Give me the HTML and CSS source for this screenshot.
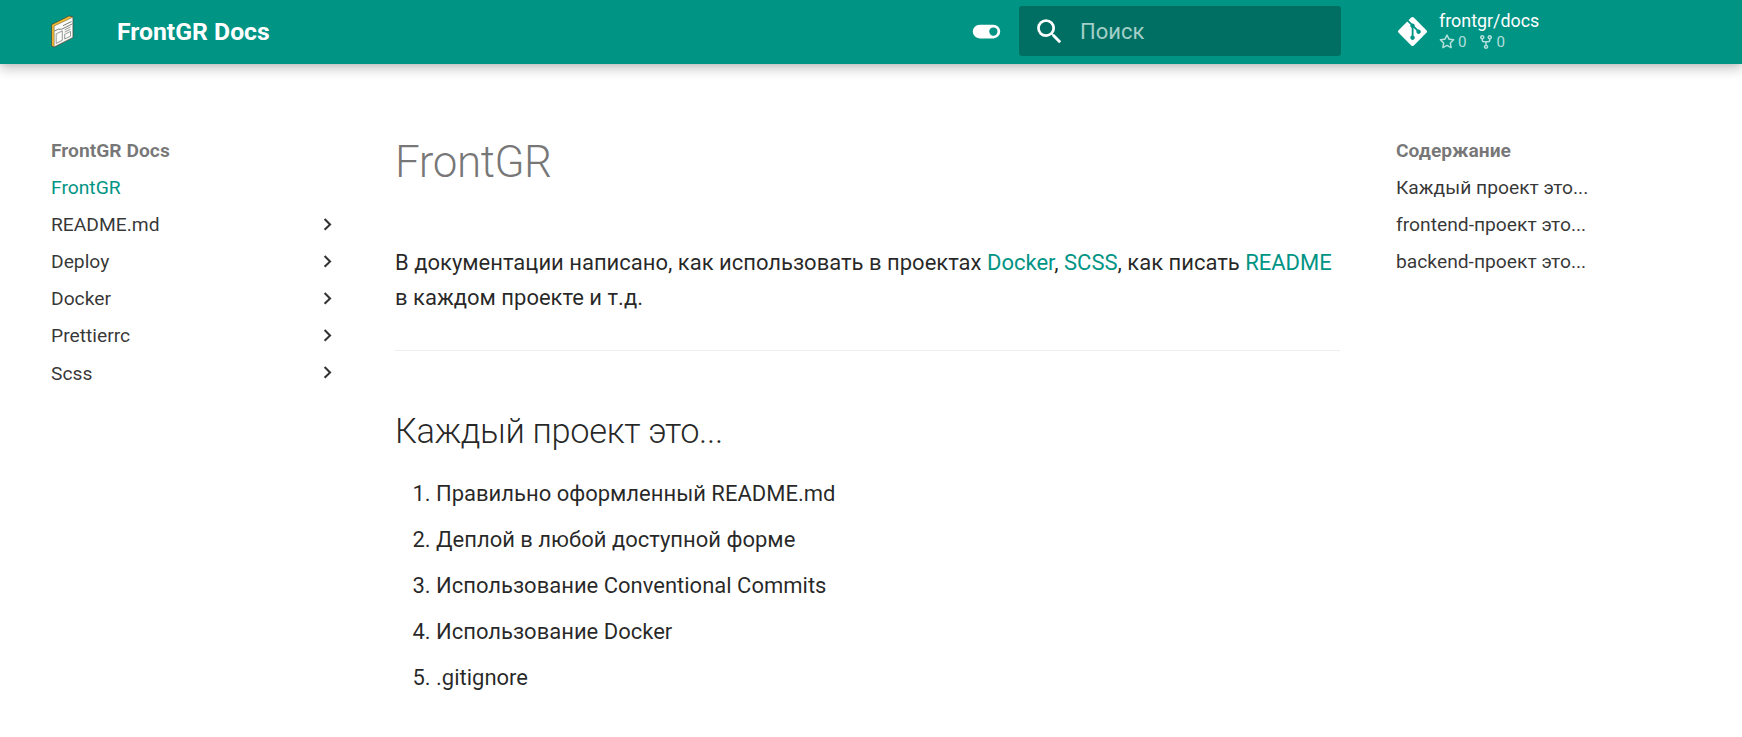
FILE: index.html
```
<!DOCTYPE html>
<html lang="ru">
<head>
<meta charset="utf-8">
<title>FrontGR Docs</title>
<link rel="stylesheet" href="styles.css">
</head>
<body>
<header class="header">
  <a class="logo" href="#">
    <svg viewBox="0 0 24 34" width="24" height="34">
      <path d="M.6 9.6 18 .9 21.8 1.8 21.9 22.4 3.2 32.2.6 31Z" fill="#f2b92d" stroke="#3d4a45" stroke-width=".8" stroke-linejoin="round"/>
      <path d="M3.2 11 21.8 2.2V22.4L3.2 31.8Z" fill="#fbfbf9" stroke="#555d5a" stroke-width=".5"/>
      <path d="M3.5 16 7.5 14.1 10.5 14.3 21.5 8.8M12 10.7l8.5-4.2" fill="none" stroke="#555d5a" stroke-width=".8"/>
      <path d="M5.2 18.9 11.3 15.9V25.3L5.2 28.4ZM13.7 14.8l5.8-2.9M13.7 17.1l5.8-2.9M13.7 19.3 19.5 16.4V21.2L13.7 24Z" fill="none" stroke="#6a716e" stroke-width=".7"/>
    </svg>
  </a>
  <span class="site-title">FrontGR Docs</span>
  <svg class="toggle" viewBox="0 0 24 24"><path d="M17 7H7a5 5 0 0 0-5 5 5 5 0 0 0 5 5h10a5 5 0 0 0 5-5 5 5 0 0 0-5-5m0 8a3 3 0 0 1-3-3 3 3 0 0 1 3-3 3 3 0 0 1 3 3 3 3 0 0 1-3 3"/></svg>
  <div class="search">
    <svg class="search-icon" viewBox="0 0 24 24"><path d="M9.5 3A6.5 6.5 0 0 1 16 9.5c0 1.61-.59 3.09-1.56 4.23l.27.27h.79l5 5-1.5 1.5-5-5v-.79l-.27-.27A6.52 6.52 0 0 1 9.5 16 6.5 6.5 0 0 1 3 9.5 6.5 6.5 0 0 1 9.5 3m0 2C7 5 5 7 5 9.5S7 14 9.5 14 14 12 14 9.5 12 5 9.5 5"/></svg>
    <span class="search-text">Поиск</span>
  </div>
  <a class="source" href="#">
    <svg class="git" viewBox="0 0 448 512"><path d="M439.55 236.05 244 40.45a28.87 28.87 0 0 0-40.81 0l-40.66 40.63 51.52 51.52c27.06-9.14 52.68 16.77 43.39 43.68l49.66 49.66c34.23-11.8 61.18 31 35.47 56.69-26.49 26.49-70.21-2.87-56-37.34L240.22 199v121.85c25.3 12.54 22.26 41.85 9.08 55a34.34 34.34 0 0 1-48.55 0c-17.57-17.6-11.07-46.91 11.25-56v-123c-20.8-8.51-24.6-30.74-18.64-45L142.57 101 8.45 235.14a28.86 28.86 0 0 0 0 40.81l195.61 195.6a28.86 28.86 0 0 0 40.8 0l194.69-194.69a28.86 28.86 0 0 0 0-40.81z"/></svg>
    <span class="repo">
      <span class="repo-name">frontgr/docs</span>
      <span class="facts">
        <span class="fact"><svg viewBox="0 0 16 16"><path d="M8 .25a.75.75 0 0 1 .673.418l1.882 3.815 4.21.612a.75.75 0 0 1 .416 1.279l-3.046 2.97.719 4.192a.751.751 0 0 1-1.088.791L8 12.347l-3.766 1.98a.75.75 0 0 1-1.088-.79l.72-4.194L.818 6.374a.75.75 0 0 1 .416-1.28l4.21-.611L7.327.668A.75.75 0 0 1 8 .25Zm0 2.445L6.615 5.5a.75.75 0 0 1-.564.41l-3.097.45 2.24 2.184a.75.75 0 0 1 .216.664l-.528 3.084 2.769-1.456a.75.75 0 0 1 .698 0l2.77 1.456-.53-3.084a.75.75 0 0 1 .216-.664l2.24-2.183-3.096-.45a.75.75 0 0 1-.564-.41L8 2.694Z"/></svg>0</span>
        <span class="fact"><svg viewBox="0 0 16 16"><path d="M5 5.372v.878c0 .414.336.75.75.75h4.5a.75.75 0 0 0 .75-.75v-.878a2.25 2.25 0 1 1 1.5 0v.878a2.25 2.25 0 0 1-2.25 2.25h-1.5v2.128a2.251 2.251 0 1 1-1.5 0V8.5h-1.5A2.25 2.25 0 0 1 3.5 6.25v-.878a2.25 2.25 0 1 1 1.5 0ZM5 3.25a.75.75 0 1 0-1.5 0 .75.75 0 0 0 1.5 0Zm6.75.75a.75.75 0 1 0 0-1.5.75.75 0 0 0 0 1.5Zm-3 8.75a.75.75 0 1 0-1.5 0 .75.75 0 0 0 1.5 0Z"/></svg>0</span>
      </span>
    </span>
  </a>
</header>
<div class="page">
  <nav class="nav">
    <div class="nav-title">FrontGR Docs</div>
    <a class="nav-item active" href="#">FrontGR</a>
    <a class="nav-item" href="#">README.md<svg viewBox="0 0 24 24"><path d="M8.59 16.58 13.17 12 8.59 7.41 10 6l6 6-6 6z"/></svg></a>
    <a class="nav-item" href="#">Deploy<svg viewBox="0 0 24 24"><path d="M8.59 16.58 13.17 12 8.59 7.41 10 6l6 6-6 6z"/></svg></a>
    <a class="nav-item" href="#">Docker<svg viewBox="0 0 24 24"><path d="M8.59 16.58 13.17 12 8.59 7.41 10 6l6 6-6 6z"/></svg></a>
    <a class="nav-item" href="#">Prettierrc<svg viewBox="0 0 24 24"><path d="M8.59 16.58 13.17 12 8.59 7.41 10 6l6 6-6 6z"/></svg></a>
    <a class="nav-item" href="#">Scss<svg viewBox="0 0 24 24"><path d="M8.59 16.58 13.17 12 8.59 7.41 10 6l6 6-6 6z"/></svg></a>
  </nav>
  <main class="content">
    <h1>FrontGR</h1>
    <p>В документации написано, как использовать в проектах <a href="#">Docker</a>, <a href="#">SCSS</a>, как писать <a href="#">README</a> в каждом проекте и т.д.</p>
    <hr>
    <h2>Каждый проект это...</h2>
    <ol>
      <li>Правильно оформленный README.md</li>
      <li>Деплой в любой доступной форме</li>
      <li>Использование Conventional Commits</li>
      <li>Использование Docker</li>
      <li>.gitignore</li>
    </ol>
  </main>
  <nav class="nav toc">
    <div class="nav-title">Содержание</div>
    <a class="nav-item" href="#">Каждый проект это...</a>
    <a class="nav-item" href="#">frontend-проект это...</a>
    <a class="nav-item" href="#">backend-проект это...</a>
  </nav>
</div>
</body>
</html>
```
FILE: styles.css
```
* { box-sizing: border-box; }
body {
  margin: 0;
  height: 737px;
  overflow: hidden;
  background: #fff;
  color: rgba(0, 0, 0, .85);
  font-family: Roboto, "Noto Sans", sans-serif;
  font-size: 22px;
}
a { color: #009485; text-decoration: none; }
svg { display: block; fill: currentColor; flex: none; }

.header {
  display: flex;
  align-items: center;
  height: 64px;
  padding-left: 51px;
  background: #009485;
  color: #fff;
  box-shadow: 0 0 5.5px rgba(0, 0, 0, .1), 0 5.5px 11px rgba(0, 0, 0, .2);
}
.logo { width: 66px; }
.site-title { flex: none; width: 853px; font-size: 24.75px; font-weight: 700; line-height: 64px; }
.toggle { width: 33px; height: 33px; margin-bottom: 2px; }
.search {
  display: flex;
  align-items: center;
  width: 322px;
  height: 50px;
  margin-left: 16px;
  margin-bottom: 2px;
  padding-left: 14px;
  border-radius: 3px;
  background: #006f63;
}
.search-icon { width: 33px; height: 33px; }
.search-text { margin-left: 14px; color: #a3cfc9; }
.source { display: flex; align-items: center; margin-left: 57px; color: #fff; }
.git { width: 29px; height: 33px; margin-bottom: 2px; }
.repo { display: flex; flex-direction: column; margin-left: 12px; margin-bottom: 1px; }
.repo-name { font-size: 17.88px; line-height: 21px; }
.facts { display: flex; gap: 11px; height: 23px; font-size: 15.13px; line-height: 23px; color: #b5dfdb; }
.fact { display: flex; align-items: center; gap: 3px; }
.fact svg { width: 16px; height: 16px; }

.page { display: grid; grid-template-columns: 344px 945px 1fr; padding-left: 51px; }
.nav { padding-top: 75px; font-size: 19.25px; }
.nav-title { height: 24px; line-height: 24px; font-weight: 700; color: rgba(0, 0, 0, .54); }
.nav-item {
  display: flex;
  justify-content: space-between;
  align-items: center;
  width: 289px;
  height: 24.1px;
  margin-top: 13px;
  line-height: 24px;
  color: rgba(0, 0, 0, .8);
}
.nav-item svg { width: 24.75px; height: 24.75px; margin-bottom: 2px; }
.nav-item.active { color: #009485; }
.toc { padding-left: 56px; }

.content { padding-top: 70px; }
h1 { margin: 0 0 55px; font-size: 44px; font-weight: 300; line-height: 56px; letter-spacing: -.01em; color: rgba(0, 0, 0, .54); }
p { margin: 0; line-height: 35.2px; }
hr { height: 1px; margin: 34.6px 0 0; border: 0; background: #eee; }
h2 { margin: 57px 0 0; font-size: 34.38px; font-weight: 300; line-height: 46px; letter-spacing: -.01em; }
ol { margin: 22px 0 0; padding-left: 41px; }
li { height: 35.2px; margin-bottom: 10.9px; line-height: 35.2px; }
```
